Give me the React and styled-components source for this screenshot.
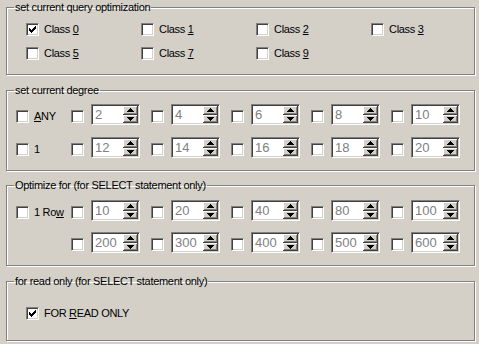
import React from "react";
import styled, { createGlobalStyle } from "styled-components";

const GlobalStyle = createGlobalStyle`
  html, body {
    margin: 0;
    padding: 0;
    background: #d4d0c8;
  }
  body {
    font-family: "Liberation Sans", Arial, sans-serif;
    font-size: 11px;
    letter-spacing: -0.3px;
    color: #000;
  }
`;

const Page = styled.div`
  width: 479px;
  height: 344px;
  padding-top: 1px;
  box-sizing: border-box;
  overflow: hidden;
`;

const Group = styled.fieldset`
  box-sizing: border-box;
  width: 469px;
  margin: ${(p) => p.$top || 0}px 0 0 6px;
  padding: 0 0 ${(p) => p.$bottom || 12}px 9px;
  border: 1px solid #808080;
  box-shadow: inset 1px 1px 0 #fff, 1px 1px 0 #fff;
  min-width: 0;
`;

const Title = styled.legend`
  margin-left: -2px;
  padding: 0 1px;
  line-height: 13px;
  height: 13px;
`;

const ClassGrid = styled.div`
  display: grid;
  grid-template-columns: repeat(4, 115px);
  row-gap: 11px;
  margin: ${(p) => p.$top || 9}px 0 0 10px;
`;

const SpinGrid = styled.div`
  display: grid;
  grid-template-columns: 55px repeat(5, 80px);
  grid-auto-rows: 21px;
  row-gap: ${(p) => p.$gap}px;
  margin-top: ${(p) => p.$top}px;
`;

const Option = styled.label`
  display: flex;
  align-items: center;
  gap: 5px;
  height: 13px;
  line-height: 13px;
  white-space: nowrap;
`;

const Cell = styled.div`
  display: flex;
  align-items: flex-start;
  gap: 7px;
  & > ${Option} {
    margin-top: 6px;
  }
`;

const Box = styled.span`
  position: relative;
  display: inline-block;
  flex: none;
  box-sizing: border-box;
  width: 13px;
  height: 13px;
  background: #fff;
  border-top: 1px solid #808080;
  border-left: 1px solid #808080;
  border-bottom: 1px solid #fff;
  border-right: 1px solid #fff;
  box-shadow: inset 1px 1px 0 #404040, inset -1px -1px 0 #d4d0c8;
`;

const Mark = styled.svg`
  position: absolute;
  left: 1px;
  top: 1px;
`;

const Spin = styled.div`
  display: flex;
  box-sizing: border-box;
  width: 49px;
  height: 21px;
  background: #fff;
  border-top: 1px solid #808080;
  border-left: 1px solid #808080;
  border-bottom: 1px solid #fff;
  border-right: 1px solid #fff;
  box-shadow: inset 1px 1px 0 #404040, inset -1px -1px 0 #d4d0c8;
  padding: 1px;
`;

const SpinText = styled.span`
  flex: 1;
  padding-left: 2px;
  font-size: 13px;
  letter-spacing: 0;
  line-height: 17px;
  color: #808080;
`;

const Buttons = styled.div`
  display: flex;
  flex-direction: column;
  width: 15px;
`;

const ArrowButton = styled.div`
  flex: 1;
  display: flex;
  align-items: center;
  justify-content: center;
  background: #d4d0c8;
  box-shadow: inset -1px -1px 0 #404040, inset 1px 1px 0 #fff,
    inset -2px -2px 0 #808080;
`;

const Check = ({ checked }) => (
  <Box>
    {checked && (
      <Mark width="9" height="9" viewBox="0 0 9 9" shapeRendering="crispEdges">
        <path
          d="M1 3h1v1h1v1h1V4h1V3h1V2h1V1h1v3H7v1H6v1H5v1H4v1H3V7H2V6H1z"
          fill="#000"
        />
      </Mark>
    )}
  </Box>
);

const Option1 = ({ checked, children }) => (
  <Option>
    <Check checked={checked} />
    <span>{children}</span>
  </Option>
);

const Arrow = ({ up }) => (
  <svg width="7" height="4" viewBox="0 0 7 4" shapeRendering="crispEdges">
    <path
      d={up ? "M3 0h1v1h1v1h1v1h1v1H0V3h1V2h1V1h1z" : "M0 0h7v1H6v1H5v1H4v1H3V3H2V2H1V1H0z"}
      fill="#000"
    />
  </svg>
);

const SpinBox = ({ value }) => (
  <Spin>
    <SpinText>{value}</SpinText>
    <Buttons>
      <ArrowButton>
        <Arrow up />
      </ArrowButton>
      <ArrowButton>
        <Arrow />
      </ArrowButton>
    </Buttons>
  </Spin>
);

const SpinCell = ({ value }) => (
  <Cell>
    <Option>
      <Check />
    </Option>
    <SpinBox value={value} />
  </Cell>
);

const classes = [
  ["0", true],
  ["1"],
  ["2"],
  ["3"],
  ["5"],
  ["7"],
  ["9"],
];

const degreeRows = [
  { label: <><u>A</u>NY</>, values: [2, 4, 6, 8, 10] },
  { label: "1", values: [12, 14, 16, 18, 20] },
];

const optimizeRows = [
  { label: <>1 Ro<u>w</u></>, values: [10, 20, 40, 80, 100] },
  { label: null, values: [200, 300, 400, 500, 600] },
];

const SpinRows = ({ rows, gap, top }) => (
  <SpinGrid $gap={gap} $top={top}>
    {rows.map((row, i) => (
      <React.Fragment key={i}>
        <Cell>{row.label && <Option1>{row.label}</Option1>}</Cell>
        {row.values.map((v) => (
          <SpinCell key={v} value={v} />
        ))}
      </React.Fragment>
    ))}
  </SpinGrid>
);

export default function App() {
  return (
    <Page>
      <GlobalStyle />
      <Group $bottom={14}>
        <Title>set current query optimization</Title>
        <ClassGrid>
          {classes.map(([n, checked]) => (
            <Option1 key={n} checked={checked}>
              Class <u>{n}</u>
            </Option1>
          ))}
        </ClassGrid>
      </Group>

      <Group $top={9} $bottom={12}>
        <Title>set current degree</Title>
        <SpinRows rows={degreeRows} gap={12} top={7} />
      </Group>

      <Group $top={8} $bottom={12}>
        <Title>Optimize for (for SELECT statement only)</Title>
        <SpinRows rows={optimizeRows} gap={11} top={8} />
      </Group>

      <Group $top={9} $bottom={20}>
        <Title>for read only (for SELECT statement only)</Title>
        <ClassGrid $top={19}>
          <Option1 checked>
            FOR <u>R</u>EAD ONLY
          </Option1>
        </ClassGrid>
      </Group>
    </Page>
  );
}
